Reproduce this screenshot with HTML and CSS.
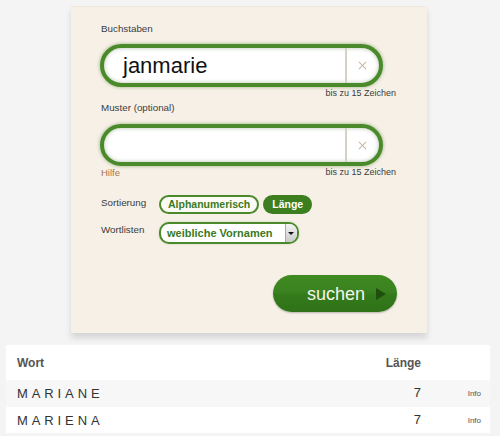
FILE: index.html
```html
<!DOCTYPE html>
<html lang="de">
<head>
<meta charset="utf-8">
<title>Wortsuche</title>
<link rel="stylesheet" href="styles.css">
</head>
<body>
<div class="panel">
  <div class="label">Buchstaben</div>
  <div class="field">
    <div class="value">janmarie</div>
    <div class="clear"><svg class="x-icon" viewBox="0 0 10 10"><path d="M1 1 L9 9 M9 1 L1 9"/></svg></div>
  </div>
  <div class="under"><span></span><span class="hint">bis zu 15 Zeichen</span></div>
  <div class="label label2">Muster (optional)</div>
  <div class="field field2">
    <div class="value"></div>
    <div class="clear"><svg class="x-icon" viewBox="0 0 10 10"><path d="M1 1 L9 9 M9 1 L1 9"/></svg></div>
  </div>
  <div class="under"><span class="help">Hilfe</span><span class="hint">bis zu 15 Zeichen</span></div>
  <div class="opt-row">
    <div class="opt-label">Sortierung</div>
    <div class="segs">
      <span class="seg">Alphanumerisch</span>
      <span class="seg seg-on">Länge</span>
    </div>
  </div>
  <div class="opt-row opt-row2">
    <div class="opt-label">Wortlisten</div>
    <div class="select">
      <span class="sel-text">weibliche Vornamen</span>
      <span class="sel-arrow"><span class="tri"></span></span>
    </div>
  </div>
  <div class="btn-row">
    <div class="search">
      <span class="search-text">suchen</span>
      <span class="play"></span>
    </div>
  </div>
</div>
<div class="results">
  <div class="r-head">
    <span class="c-word">Wort</span>
    <span class="c-len">Länge</span>
    <span class="c-info"></span>
  </div>
  <div class="r-row r-odd">
    <span class="c-word word">MARIANE</span>
    <span class="c-len num">7</span>
    <span class="c-info info">Info</span>
  </div>
  <div class="r-row">
    <span class="c-word word">MARIENA</span>
    <span class="c-len num">7</span>
    <span class="c-info info">Info</span>
  </div>
</div>
</body>
</html>
```

FILE: styles.css
```css
html, body {
  margin: 0;
  padding: 0;
}
body {
  background: #f4f4f4;
  font-family: "Liberation Sans", Arial, sans-serif;
  color: #444;
  width: 500px;
  height: 436px;
  overflow: hidden;
}
.panel {
  margin: 6px 0 0 71px;
  width: 356px;
  box-sizing: border-box;
  padding: 16px 0 21px 29px;
  background: #f6f0e7;
  border-top: 1px solid #eee8df;
  box-shadow: 0 5px 6px rgba(0, 0, 0, 0.13);
}
.label {
  font-size: 9.8px;
  line-height: 12px;
  padding-left: 1px;
  color: #3c3c3c;
}
.label2 {
  margin-top: 3px;
}
.field {
  margin-top: 9px;
  width: 283px;
  height: 43px;
  box-sizing: border-box;
  border: 4px solid #4a8a2b;
  border-radius: 22px;
  background: #fff;
  display: flex;
  box-shadow: 0 0 3px 1px rgba(80, 130, 40, 0.35), inset 0 0 4px rgba(40, 80, 20, 0.35);
}
.field2 {
  margin-top: 10px;
  height: 42px;
}
.value {
  flex: 1;
  font-size: 22px;
  line-height: 35px;
  color: #111;
  padding-left: 19px;
}
.clear {
  width: 30px;
  border-left: 2px solid #d6cfc3;
  display: flex;
  align-items: center;
  justify-content: center;
  padding-right: 2px;
}
.x-icon {
  width: 9px;
  height: 9px;
  fill: none;
  stroke: #c9b7a3;
  stroke-width: 1.2;
}
.under {
  width: 296px;
  display: flex;
  justify-content: space-between;
  font-size: 9px;
  line-height: 11px;
  margin-top: 1px;
}
.hint {
  color: #3c3c3c;
}
.help {
  color: #a8774c;
  padding-left: 1px;
  font-size: 9.5px;
}
.opt-row {
  display: flex;
  margin-top: 17px;
}
.opt-row2 {
  margin-top: 8px;
}
.opt-label {
  width: 59px;
  padding-left: 1px;
  box-sizing: border-box;
  font-size: 9.8px;
  line-height: 12px;
  padding-top: 2px;
  color: #3c3c3c;
}
.segs {
  display: flex;
  gap: 4px;
}
.seg {
  height: 19px;
  box-sizing: border-box;
  border: 2px solid #4a8a2b;
  border-radius: 10px;
  padding: 0 7px;
  font-size: 10.5px;
  font-weight: bold;
  line-height: 15px;
  color: #3a7a1e;
  background: #fcfaf4;
}
.seg-on {
  background: #3d7f1f;
  border-color: #3d7f1f;
  color: #fff;
}
.select {
  width: 140px;
  height: 22px;
  box-sizing: border-box;
  border: 2px solid #4a8a2b;
  border-radius: 10px;
  background: #fff;
  display: flex;
  overflow: hidden;
  box-shadow: 0 0 2px rgba(80, 130, 40, 0.3);
}
.sel-text {
  flex: 1;
  font-size: 11px;
  font-weight: bold;
  line-height: 18px;
  color: #3a7a1e;
  padding-left: 6px;
}
.sel-arrow {
  width: 10px;
  border-left: 1px solid #a9a9a9;
  background: linear-gradient(#f4f4f4, #c9c9c9);
  display: flex;
  align-items: center;
  justify-content: center;
  padding-right: 1px;
}
.tri {
  width: 0;
  height: 0;
  border-left: 3px solid transparent;
  border-right: 3px solid transparent;
  border-top: 3px solid #111;
}
.btn-row {
  width: 297px;
  display: flex;
  justify-content: flex-end;
  margin-top: 31px;
}
.search {
  width: 124px;
  height: 37px;
  border-radius: 19px;
  background: linear-gradient(#3f8a20 0%, #3a8220 45%, #347a1b 55%, #2f7218 100%);
  box-shadow: 0 1px 2px rgba(0, 0, 0, 0.25);
  display: flex;
  align-items: center;
  box-sizing: border-box;
  padding-left: 34px;
}
.search-text {
  color: #f2f7ea;
  font-size: 18px;
  line-height: 20px;
}
.play {
  margin-left: 11px;
  width: 0;
  height: 0;
  border-top: 6px solid transparent;
  border-bottom: 6px solid transparent;
  border-left: 10px solid #1f4f0d;
}
.results {
  margin: 12px 0 0 6px;
  width: 484px;
}
.r-head, .r-row {
  display: flex;
  align-items: center;
}
.r-head {
  height: 35px;
  background: #fff;
  font-weight: bold;
  font-size: 12px;
  color: #555;
}
.r-row {
  height: 26px;
  background: #fff;
}
.r-odd {
  height: 27px;
  background: #f7f7f7;
}
.c-word {
  width: 367px;
  padding-left: 11px;
  box-sizing: border-box;
}
.c-len {
  width: 48px;
  text-align: right;
}
.c-info {
  flex: 1;
  text-align: right;
  padding-right: 9px;
}
.word {
  font-size: 13px;
  letter-spacing: 3.9px;
  color: #333;
}
.num {
  font-size: 13px;
  color: #333;
  padding-bottom: 2px;
}
.info {
  font-size: 8px;
  color: #555;
}
```
